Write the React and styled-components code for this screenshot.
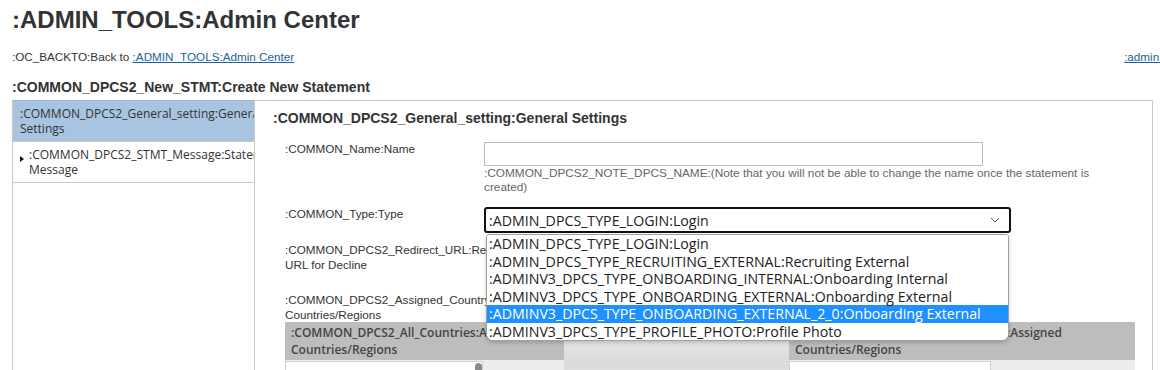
import React from 'react';
import styled, { createGlobalStyle } from 'styled-components';

const GlobalStyle = createGlobalStyle`
    html, body {
        margin: 0;
        padding: 0;
        overflow: hidden;
        background: #fff;
    }
    body {
        font-family: "Liberation Sans", Arial, sans-serif;
        color: #333;
    }
`;

const typeOptions = [
    ':ADMIN_DPCS_TYPE_LOGIN:Login',
    ':ADMIN_DPCS_TYPE_RECRUITING_EXTERNAL:Recruiting External',
    ':ADMINV3_DPCS_TYPE_ONBOARDING_INTERNAL:Onboarding Internal',
    ':ADMINV3_DPCS_TYPE_ONBOARDING_EXTERNAL:Onboarding External',
    ':ADMINV3_DPCS_TYPE_ONBOARDING_EXTERNAL_2_0:Onboarding External',
    ':ADMINV3_DPCS_TYPE_PROFILE_PHOTO:Profile Photo',
];

function App() {
    return (
        <PageStyled>
            <GlobalStyle />
            <h1 className="page-title">:ADMIN_TOOLS:Admin Center</h1>
            <div className="back-row">
                <span>
                    :OC_BACKTO:Back to <a href="#admin">:ADMIN_TOOLS:Admin Center</a>
                </span>
                <a href="#admin" className="admin-link">:admin_tools_help</a>
            </div>
            <h2 className="section-title">:COMMON_DPCS2_New_STMT:Create New Statement</h2>

            <div className="frame">
                <SideNav>
                    <NavItem $active>:COMMON_DPCS2_General_setting:General Settings</NavItem>
                    <NavItem $arrow>:COMMON_DPCS2_STMT_Message:Statement Message</NavItem>
                </SideNav>

                <MainPanel>
                    <h3 className="panel-title">:COMMON_DPCS2_General_setting:General Settings</h3>

                    <FieldRow $top={0}>
                        <Label>:COMMON_Name:Name</Label>
                        <div>
                            <TextInput type="text" />
                            <Note>
                                :COMMON_DPCS2_NOTE_DPCS_NAME:(Note that you will not be able to change the name once the statement is created)
                            </Note>
                        </div>
                    </FieldRow>

                    <FieldRow $top={13}>
                        <Label>:COMMON_Type:Type</Label>
                        <SelectWrap>
                            <SelectBox>
                                <span>:ADMIN_DPCS_TYPE_LOGIN:Login</span>
                                <svg width="10" height="6" viewBox="0 0 10 6">
                                    <path d="M1 1l4 4 4-4" fill="none" stroke="#555" strokeWidth="1" />
                                </svg>
                            </SelectBox>
                            <OptionList>
                                {typeOptions.map((opt, i) => (
                                    <OptionItem key={opt} $selected={i === 4}>{opt}</OptionItem>
                                ))}
                            </OptionList>
                        </SelectWrap>
                    </FieldRow>

                    <FieldRow $top={10}>
                        <Label>:COMMON_DPCS2_Redirect_URL:Redirect URL for Decline</Label>
                        <div />
                    </FieldRow>

                    <WideLabel>:COMMON_DPCS2_Assigned_Country:Assigned Countries/Regions</WideLabel>

                    <PickerTable>
                        <PickerHead>:COMMON_DPCS2_All_Countries:All Countries/Regions</PickerHead>
                        <PickerMiddle />
                        <PickerHead>:COMMON_DPCS2_Assigned_Country:Assigned Countries/Regions</PickerHead>
                        <PickerCell>
                            <ListBox $width={198}>
                                <span className="thumb" />
                            </ListBox>
                        </PickerCell>
                        <PickerMiddle $body />
                        <PickerCell>
                            <ListBox $width={202} />
                        </PickerCell>
                    </PickerTable>
                </MainPanel>
            </div>
        </PageStyled>
    );
}

const PageStyled = styled.div`
    padding: 0 0 0 12px;
    width: 1207px;

    .page-title{
        margin: 0;
        padding-top: 6px;
        font-size: 24px;
        line-height: 28px;
        font-weight: bold;
        color: #333;
    }
    .back-row{
        display: flex;
        justify-content: space-between;
        margin-top: 16px;
        font-size: 11.7px;
        line-height: 14px;
        color: #333;
        a{
            color: #1a6496;
            text-decoration: underline;
        }
    }
    .section-title{
        margin: 15px 0 0;
        font-size: 14px;
        line-height: 17px;
        font-weight: bold;
        color: #333;
    }
    .frame{
        display: flex;
        margin-top: 4px;
        width: 1141px;
        height: 300px;
    }
`;

const SideNav = styled.nav`
    width: 241px;
    flex: none;
    border: 1px solid #c9c9c9;
    border-top-color: #9fb8d2;
    border-right: none;
    overflow: hidden;
    font-family: "Open Sans", "Noto Sans", sans-serif;
    font-size: 12px;
    line-height: 15px;
    color: #333;
`;

const NavItem = styled.div`
    position: relative;
    height: 41px;
    box-sizing: border-box;
    padding: ${({ $arrow }) => ($arrow ? '5px 0 0 16px' : '5px 0 0 7px')};
    background: ${({ $active }) => ($active ? '#a9c4e0' : '#fff')};
    border-bottom: 1px solid #c9c9c9;
    &::before{
        content: '';
        display: ${({ $arrow }) => ($arrow ? 'block' : 'none')};
        position: absolute;
        left: 7px;
        top: 14px;
        border-left: 4px solid #111;
        border-top: 3.5px solid transparent;
        border-bottom: 3.5px solid transparent;
    }
`;

const MainPanel = styled.section`
    flex: 1;
    border: 1px solid #c9c9c9;
    padding: 9px 0 0 20px;
    .panel-title{
        margin: 0 0 16px -2px;
        font-size: 14px;
        line-height: 16px;
        font-weight: bold;
        color: #333;
    }
`;

const FieldRow = styled.div`
    display: grid;
    grid-template-columns: 199px 1fr;
    margin-top: ${({ $top }) => $top}px;
    padding-left: 12px;
    margin-left: -2px;
`;

const Label = styled.div`
    margin-top: -1px;
    font-size: 11.7px;
    line-height: 15px;
    color: #333;
`;

const WideLabel = styled(Label)`
    margin: 20px 0 0 -2px;
    padding-left: 12px;
    width: 199px;
`;

const TextInput = styled.input`
    display: block;
    box-sizing: border-box;
    width: 499px;
    height: 24px;
    margin: 0;
    border: 1px solid #bdbdbd;
    border-radius: 0;
    background: #fff;
`;

const Note = styled.div`
    width: 620px;
    font-size: 11.8px;
    line-height: 14px;
    color: #666;
`;

const SelectWrap = styled.div`
    position: relative;
    width: 527px;
`;

const SelectBox = styled.div`
    display: flex;
    align-items: center;
    justify-content: space-between;
    box-sizing: border-box;
    height: 26px;
    padding: 0 9px 0 3px;
    border: 2px solid #111;
    border-radius: 3px;
    background: #fff;
    font-family: "Open Sans", "Noto Sans", sans-serif;
    font-size: 14.2px;
    color: #222;
`;

const OptionList = styled.ul`
    position: absolute;
    z-index: 5;
    top: 27px;
    left: 2px;
    width: 523px;
    margin: 0;
    padding: 0;
    list-style: none;
    box-sizing: border-box;
    background: #fff;
    border: 1px solid #a0a0a0;
    border-radius: 3px 3px 7px 7px;
    box-shadow: 0 2px 4px rgba(0, 0, 0, 0.18);
    overflow: hidden;
    font-family: "Open Sans", "Noto Sans", sans-serif;
    font-size: 14.2px;
`;

const OptionItem = styled.li`
    height: 17.5px;
    line-height: 17px;
    padding-left: 2px;
    white-space: nowrap;
    color: ${({ $selected }) => ($selected ? '#fff' : '#222')};
    background: ${({ $selected }) => ($selected ? '#1e90ff' : '#fff')};
`;

const PickerTable = styled.div`
    display: grid;
    grid-template-columns: 279px 225px 346px;
    grid-template-rows: 38px 60px;
    margin-left: 10px;
`;

const PickerHead = styled.div`
    padding: 2px 5px 0 6px;
    background: #bdbdbd;
    font-family: "Open Sans", "Noto Sans", sans-serif;
    font-size: 12px;
    font-weight: 600;
    line-height: 17px;
    color: #444;
    overflow: hidden;
`;

const PickerMiddle = styled.div`
    background: ${({ $body }) => ($body ? 'linear-gradient(#dadada, #ececec)' : 'linear-gradient(#f2f2f2, #dadada)')};
`;

const PickerCell = styled.div`
    padding-top: 1px;
    background: #ececec;
`;

const ListBox = styled.div`
    position: relative;
    width: ${({ $width }) => $width}px;
    height: 100%;
    box-sizing: border-box;
    background: #fff;
    border: 1px solid #cfcfcf;
    .thumb{
        position: absolute;
        right: 0;
        top: 1px;
        width: 7px;
        height: 40px;
        border-radius: 4px;
        background: #8a8a8a;
    }
`;

export default App;
